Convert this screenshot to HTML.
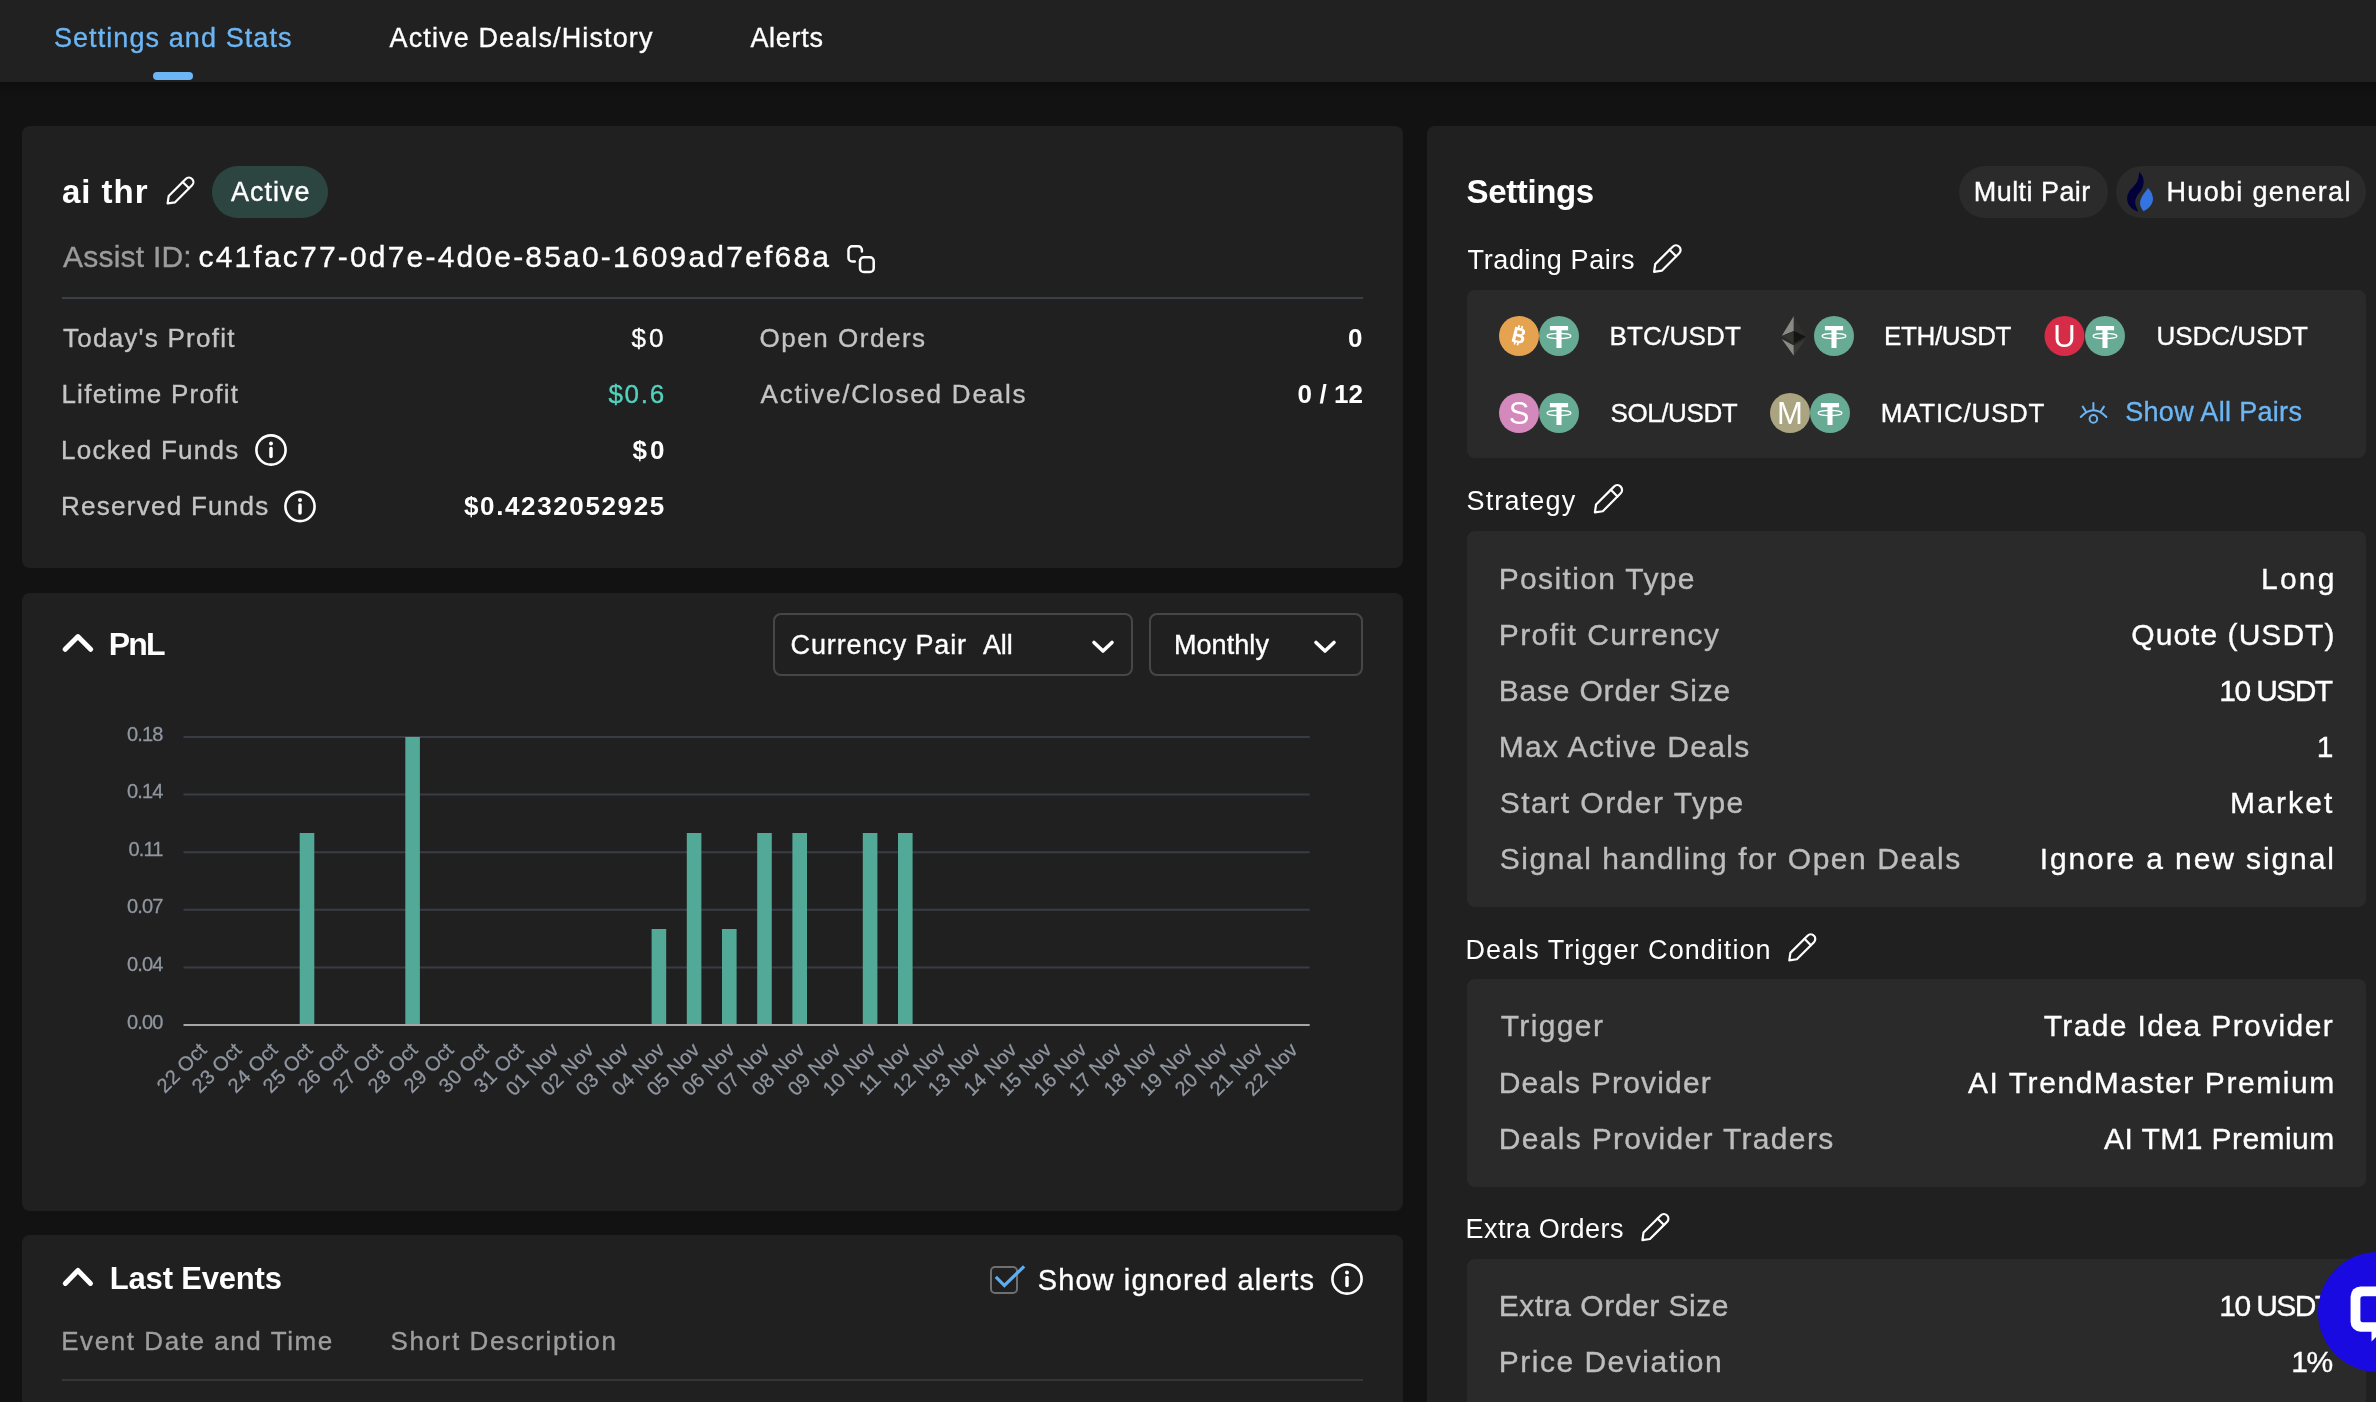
<!DOCTYPE html><html><head><meta charset="utf-8"><style>
html,body{margin:0;padding:0;width:2376px;height:1402px;overflow:hidden;background:#121212;font-family:"Liberation Sans",sans-serif}
.t{position:absolute;white-space:pre;font-family:"Liberation Sans",sans-serif;-webkit-font-smoothing:antialiased}
body{-webkit-font-smoothing:antialiased}
</style></head><body>
<div style="position:absolute;left:0px;top:0px;width:2376px;height:82px;background:#212121;border-radius:0px;"></div>
<div style="position:absolute;left:0px;top:82px;width:2376px;height:14px;background:linear-gradient(#0e0e0e,#121212);border-radius:0px;"></div>
<div style="position:absolute;left:153px;top:72px;width:40px;height:8px;background:#6cb6f5;border-radius:4px;"></div>
<div style="position:absolute;left:22px;top:126px;width:1381px;height:442px;background:#202020;border-radius:8px;"></div>
<div style="position:absolute;left:22px;top:593px;width:1381px;height:618px;background:#202020;border-radius:8px;"></div>
<div style="position:absolute;left:22px;top:1235px;width:1381px;height:185px;background:#202020;border-radius:8px;"></div>
<div style="position:absolute;left:1427px;top:126px;width:973px;height:1294px;background:#202020;border-radius:8px;"></div>
<div style="position:absolute;left:212px;top:166px;width:116px;height:52px;background:#2c4541;border-radius:26px;"></div>
<div style="position:absolute;left:62px;top:297px;width:1301px;height:2px;background:#3b3f48;border-radius:0px;"></div>
<div style="position:absolute;left:773px;top:613px;width:360px;height:63px;background:transparent;border-radius:8px;box-sizing:border-box;border:2px solid #474747;"></div>
<div style="position:absolute;left:1149px;top:613px;width:214px;height:63px;background:transparent;border-radius:8px;box-sizing:border-box;border:2px solid #474747;"></div>
<div style="position:absolute;left:990px;top:1266px;width:28px;height:28px;background:transparent;border-radius:5px;box-sizing:border-box;border:2px solid #6f6f6f;"></div>
<div style="position:absolute;left:62px;top:1379px;width:1301px;height:2px;background:#363636;border-radius:0px;"></div>
<div style="position:absolute;left:1959px;top:166px;width:149px;height:52px;background:#2b2b2b;border-radius:26px;"></div>
<div style="position:absolute;left:2116px;top:166px;width:250px;height:52px;background:#2b2b2b;border-radius:26px;"></div>
<div style="position:absolute;left:1467px;top:290px;width:899px;height:168px;background:#2a2a2a;border-radius:8px;"></div>
<div style="position:absolute;left:1467px;top:531px;width:899px;height:376px;background:#2a2a2a;border-radius:8px;"></div>
<div style="position:absolute;left:1467px;top:979px;width:899px;height:208px;background:#2a2a2a;border-radius:8px;"></div>
<div style="position:absolute;left:1467px;top:1259px;width:899px;height:181px;background:#2a2a2a;border-radius:8px;"></div>
<svg width="2376" height="1402" style="position:absolute;left:0;top:0;will-change:transform"><g transform="translate(167.60,203.40) rotate(-45)" fill="none" stroke="#fff" stroke-width="2.2" stroke-linejoin="round" stroke-linecap="round"><path d="M0,0 L6.08,-4.51 L30.10,-4.51 A4.51,4.51 0 0 1 30.10,4.51 L6.08,4.51 Z"/><path d="M25.80,-4.51 L25.80,4.51"/></g><g transform="translate(1654.10,271.80) rotate(-45)" fill="none" stroke="#fff" stroke-width="2.2" stroke-linejoin="round" stroke-linecap="round"><path d="M0,0 L6.25,-4.63 L30.92,-4.63 A4.63,4.63 0 0 1 30.92,4.63 L6.25,4.63 Z"/><path d="M26.50,-4.63 L26.50,4.63"/></g><g transform="translate(1594.90,512.40) rotate(-45)" fill="none" stroke="#fff" stroke-width="2.2" stroke-linejoin="round" stroke-linecap="round"><path d="M0,0 L6.41,-4.75 L31.73,-4.75 A4.75,4.75 0 0 1 31.73,4.75 L6.41,4.75 Z"/><path d="M27.20,-4.75 L27.20,4.75"/></g><g transform="translate(1789.30,960.40) rotate(-45)" fill="none" stroke="#fff" stroke-width="2.2" stroke-linejoin="round" stroke-linecap="round"><path d="M0,0 L6.13,-4.54 L30.33,-4.54 A4.54,4.54 0 0 1 30.33,4.54 L6.13,4.54 Z"/><path d="M26.00,-4.54 L26.00,4.54"/></g><g transform="translate(1642.40,1240.10) rotate(-45)" fill="none" stroke="#fff" stroke-width="2.2" stroke-linejoin="round" stroke-linecap="round"><path d="M0,0 L6.13,-4.54 L30.33,-4.54 A4.54,4.54 0 0 1 30.33,4.54 L6.13,4.54 Z"/><path d="M26.00,-4.54 L26.00,4.54"/></g><circle cx="271" cy="450" r="14.6" fill="none" stroke="#fff" stroke-width="2.6"/><circle cx="271" cy="443.4" r="2" fill="#fff"/><line x1="271" y1="448.4" x2="271" y2="456.6" stroke="#fff" stroke-width="3.5" stroke-linecap="round"/><circle cx="300" cy="506.5" r="14.6" fill="none" stroke="#fff" stroke-width="2.6"/><circle cx="300" cy="499.9" r="2" fill="#fff"/><line x1="300" y1="504.9" x2="300" y2="513.1" stroke="#fff" stroke-width="3.5" stroke-linecap="round"/><circle cx="1347" cy="1279" r="14.6" fill="none" stroke="#fff" stroke-width="2.6"/><circle cx="1347" cy="1272.4" r="2" fill="#fff"/><line x1="1347" y1="1277.4" x2="1347" y2="1285.6" stroke="#fff" stroke-width="3.5" stroke-linecap="round"/><g fill="none" stroke="#fff" stroke-width="2.5" stroke-linecap="round" stroke-linejoin="round"><path d="M861.9 251.5 v-1.5 a3.8 3.8 0 0 0 -3.8 -3.8 h-5.8 a3.8 3.8 0 0 0 -3.8 3.8 v7.8 a3.8 3.8 0 0 0 3.8 3.8 h2.5"/><rect x="860" y="257.3" width="13.7" height="14.8" rx="3.8"/></g><polyline points="65.2,649.3 77.9,636.6 90.6,649.3" fill="none" stroke="#fff" stroke-width="5" stroke-linecap="round" stroke-linejoin="round"/><polyline points="65.3,1283.4 77.9,1270.4 90.5,1283.4" fill="none" stroke="#fff" stroke-width="5" stroke-linecap="round" stroke-linejoin="round"/><polyline points="1094,642.5 1103,651 1112,642.5" fill="none" stroke="#fff" stroke-width="3.6" stroke-linecap="round" stroke-linejoin="round"/><polyline points="1316,642.5 1325,651 1334,642.5" fill="none" stroke="#fff" stroke-width="3.6" stroke-linecap="round" stroke-linejoin="round"/><polyline points="997,1278 1004.4,1285.5 1023,1267.5" fill="none" stroke="#5caef2" stroke-width="3.2" stroke-linecap="square"/><line x1="183.5" y1="737.0" x2="1309.7" y2="737.0" stroke="#383c44" stroke-width="2"/><line x1="183.5" y1="794.6" x2="1309.7" y2="794.6" stroke="#383c44" stroke-width="2"/><line x1="183.5" y1="852.2" x2="1309.7" y2="852.2" stroke="#383c44" stroke-width="2"/><line x1="183.5" y1="909.8" x2="1309.7" y2="909.8" stroke="#383c44" stroke-width="2"/><line x1="183.5" y1="967.4" x2="1309.7" y2="967.4" stroke="#383c44" stroke-width="2"/><line x1="183.5" y1="1025" x2="1309.7" y2="1025" stroke="#a6a6a6" stroke-width="2.2"/><rect x="299.7" y="833.0" width="14.6" height="191.0" fill="#53a997"/><rect x="405.3" y="737.0" width="14.6" height="287.0" fill="#53a997"/><rect x="651.6" y="929.0" width="14.6" height="95.0" fill="#53a997"/><rect x="686.8" y="833.0" width="14.6" height="191.0" fill="#53a997"/><rect x="722.0" y="929.0" width="14.6" height="95.0" fill="#53a997"/><rect x="757.2" y="833.0" width="14.6" height="191.0" fill="#53a997"/><rect x="792.4" y="833.0" width="14.6" height="191.0" fill="#53a997"/><rect x="862.8" y="833.0" width="14.6" height="191.0" fill="#53a997"/><rect x="898.0" y="833.0" width="14.6" height="191.0" fill="#53a997"/><g fill="none" stroke="#6cb6f5" stroke-width="2" stroke-linecap="round"><path d="M2080.8 417 Q2093.4 403.5 2106.4 417"/><line x1="2093.4" y1="410" x2="2093.4" y2="403"/><line x1="2085.7" y1="411.2" x2="2082.8" y2="406.6"/><line x1="2100.9" y1="411.2" x2="2103.9" y2="406.6"/><circle cx="2093.4" cy="418.9" r="3.8"/></g><g transform="translate(2120,165)"><path fill="#01003a" d="M19.2 7.1 C25 12 25 21 20 27 C16 31 14 37 16 41 C17 44 18.4 46.7 18.4 46.7 C12 45 7 40 7.1 33.3 C7.2 26 14 22 17 17 C19 13 19.2 7.1 19.2 7.1Z"/><path fill="#3474e0" d="M27.9 23.1 C31 26 33 30 33 34.1 C33 40 28 44 23.5 46.3 C21 43 20 40 20 38.4 C20.5 31 26 27 27.9 23.1Z"/></g><circle cx="1519" cy="336" r="20" fill="#e5a350"/><g transform="translate(1518.5,335.3) rotate(14)" fill="#fff"><path fill-rule="evenodd" d="M-5.2,-7.6 h6.4 c3,0 4.6,1.6 4.6,3.8 c0,1.6 -0.9,2.7 -2.2,3.2 c1.8,0.4 3,1.8 3,3.8 c0,2.6 -1.9,4.4 -5,4.4 h-6.8 z M-2.1,-5 v3.7 h2.9 c1.3,0 2.1,-0.7 2.1,-1.85 c0,-1.15 -0.8,-1.85 -2.1,-1.85 z M-2.1,1.5 v3.8 h3.3 c1.5,0 2.4,-0.75 2.4,-1.9 c0,-1.15 -0.9,-1.9 -2.4,-1.9 z"/><rect x="-2.6" y="-10" width="1.7" height="3"/><rect x="0.6" y="-10" width="1.7" height="3"/><rect x="-2.6" y="7" width="1.7" height="3"/><rect x="0.6" y="7" width="1.7" height="3"/></g><circle cx="1559" cy="336" r="20" fill="#67ab95"/><g fill="#fff"><rect x="1549.9" y="326" width="18.2" height="4.3"/><rect x="1556.45" y="330" width="5.1" height="18"/></g><ellipse cx="1559" cy="336" rx="12" ry="2.65" fill="none" stroke="#fff" stroke-width="1.2"/><g><polygon points="1793.8,315.9 1781.7,336 1793.8,331" fill="#8a8a86"/><polygon points="1793.8,315.9 1805.8,336.5 1793.8,331" fill="#2f2f2f"/><polygon points="1781.7,336 1793.8,331 1793.8,343.5" fill="#333331"/><polygon points="1793.8,331 1805.8,336.5 1793.8,343.5" fill="#141412"/><polygon points="1781.7,339 1793.8,345.4 1793.8,355.8" fill="#8a8a86"/><polygon points="1805.8,339 1793.8,345.4 1793.8,355.8" fill="#393934"/></g><circle cx="1834" cy="336" r="20" fill="#67ab95"/><g fill="#fff"><rect x="1824.9" y="326" width="18.2" height="4.3"/><rect x="1831.45" y="330" width="5.1" height="18"/></g><ellipse cx="1834" cy="336" rx="12" ry="2.65" fill="none" stroke="#fff" stroke-width="1.2"/><circle cx="2064.5" cy="336" r="20" fill="#d72c48"/><text x="2064.5" y="346.8" text-anchor="middle" font-family="Liberation Sans" font-size="31" fill="#fff">U</text><circle cx="2105" cy="336" r="20" fill="#67ab95"/><g fill="#fff"><rect x="2095.9" y="326" width="18.2" height="4.3"/><rect x="2102.45" y="330" width="5.1" height="18"/></g><ellipse cx="2105" cy="336" rx="12" ry="2.65" fill="none" stroke="#fff" stroke-width="1.2"/><circle cx="1519" cy="413" r="20" fill="#d489bc"/><text x="1519" y="423.8" text-anchor="middle" font-family="Liberation Sans" font-size="31" fill="#fff">S</text><circle cx="1559" cy="413" r="20" fill="#67ab95"/><g fill="#fff"><rect x="1549.9" y="403" width="18.2" height="4.3"/><rect x="1556.45" y="407" width="5.1" height="18"/></g><ellipse cx="1559" cy="413" rx="12" ry="2.65" fill="none" stroke="#fff" stroke-width="1.2"/><circle cx="1790" cy="413" r="20" fill="#aaa480"/><text x="1790" y="423.8" text-anchor="middle" font-family="Liberation Sans" font-size="31" fill="#fff">M</text><circle cx="1830" cy="413" r="20" fill="#67ab95"/><g fill="#fff"><rect x="1820.9" y="403" width="18.2" height="4.3"/><rect x="1827.45" y="407" width="5.1" height="18"/></g><ellipse cx="1830" cy="413" rx="12" ry="2.65" fill="none" stroke="#fff" stroke-width="1.2"/></svg>
<div style="position:absolute;left:0;top:0;width:2376px;height:1402px;will-change:transform">
<div class="t" style="left:53.9px;top:25.4px;font-size:27px;line-height:27px;font-weight:400;color:#6cb6f5;letter-spacing:1.09px;-webkit-text-stroke:0.35px #6cb6f5">Settings and Stats</div>
<div class="t" style="left:389.6px;top:25.4px;font-size:27px;line-height:27px;font-weight:400;color:#ffffff;letter-spacing:1.12px;-webkit-text-stroke:0.35px #ffffff">Active Deals/History</div>
<div class="t" style="left:750.4px;top:25.4px;font-size:27px;line-height:27px;font-weight:400;color:#ffffff;letter-spacing:0.72px;-webkit-text-stroke:0.35px #ffffff">Alerts</div>
<div class="t" style="left:61.9px;top:174.8px;font-size:33px;line-height:33px;font-weight:700;color:#ffffff;letter-spacing:0.98px;">ai thr</div>
<div class="t" style="left:231.0px;top:179.2px;font-size:27px;line-height:27px;font-weight:400;color:#ffffff;letter-spacing:1.00px;-webkit-text-stroke:0.35px #ffffff">Active</div>
<div class="t" style="left:63.0px;top:242.2px;font-size:30px;line-height:30px;font-weight:400;color:#9c9c9c;letter-spacing:0.22px;-webkit-text-stroke:0.35px #9c9c9c">Assist ID:</div>
<div class="t" style="left:198.5px;top:242.2px;font-size:30px;line-height:30px;font-weight:400;color:#ffffff;letter-spacing:2.19px;-webkit-text-stroke:0.35px #ffffff">c41fac77-0d7e-4d0e-85a0-1609ad7ef68a</div>
<div class="t" style="left:63.0px;top:324.9px;font-size:26px;line-height:26px;font-weight:400;color:#c4c4c4;letter-spacing:1.24px;-webkit-text-stroke:0.35px #c4c4c4">Today&#x27;s Profit</div>
<div class="t" style="left:631.5px;top:324.9px;font-size:26px;line-height:26px;font-weight:400;color:#ffffff;letter-spacing:3.00px;-webkit-text-stroke:0.35px #ffffff">$0</div>
<div class="t" style="left:61.4px;top:380.9px;font-size:26px;line-height:26px;font-weight:400;color:#c4c4c4;letter-spacing:1.26px;-webkit-text-stroke:0.35px #c4c4c4">Lifetime Profit</div>
<div class="t" style="left:608.4px;top:380.9px;font-size:26px;line-height:26px;font-weight:400;color:#52d2bd;letter-spacing:1.70px;-webkit-text-stroke:0.35px #52d2bd">$0.6</div>
<div class="t" style="left:61.0px;top:436.9px;font-size:26px;line-height:26px;font-weight:400;color:#c4c4c4;letter-spacing:1.27px;-webkit-text-stroke:0.35px #c4c4c4">Locked Funds</div>
<div class="t" style="left:632.5px;top:436.9px;font-size:26px;line-height:26px;font-weight:700;color:#ffffff;letter-spacing:3.00px;">$0</div>
<div class="t" style="left:61.0px;top:493.4px;font-size:26px;line-height:26px;font-weight:400;color:#c4c4c4;letter-spacing:1.27px;-webkit-text-stroke:0.35px #c4c4c4">Reserved Funds</div>
<div class="t" style="left:464.0px;top:493.4px;font-size:26px;line-height:26px;font-weight:700;color:#ffffff;letter-spacing:1.62px;">$0.4232052925</div>
<div class="t" style="left:759.6px;top:324.9px;font-size:26px;line-height:26px;font-weight:400;color:#c4c4c4;letter-spacing:1.52px;-webkit-text-stroke:0.35px #c4c4c4">Open Orders</div>
<div class="t" style="left:1348.0px;top:324.9px;font-size:26px;line-height:26px;font-weight:700;color:#ffffff;letter-spacing:0.00px;">0</div>
<div class="t" style="left:760.6px;top:380.9px;font-size:26px;line-height:26px;font-weight:400;color:#c4c4c4;letter-spacing:1.79px;-webkit-text-stroke:0.35px #c4c4c4">Active/Closed Deals</div>
<div class="t" style="left:1297.5px;top:380.9px;font-size:26px;line-height:26px;font-weight:700;color:#ffffff;letter-spacing:0.10px;">0 / 12</div>
<div class="t" style="left:108.7px;top:628.2px;font-size:32px;line-height:32px;font-weight:700;color:#ffffff;letter-spacing:-1.80px;">PnL</div>
<div class="t" style="left:790.5px;top:632.2px;font-size:27px;line-height:27px;font-weight:400;color:#ffffff;letter-spacing:0.88px;-webkit-text-stroke:0.35px #ffffff">Currency Pair</div>
<div class="t" style="left:983.0px;top:632.2px;font-size:27px;line-height:27px;font-weight:400;color:#ffffff;letter-spacing:-0.15px;-webkit-text-stroke:0.35px #ffffff">All</div>
<div class="t" style="left:1173.9px;top:632.2px;font-size:27px;line-height:27px;font-weight:400;color:#ffffff;letter-spacing:0.08px;-webkit-text-stroke:0.35px #ffffff">Monthly</div>
<div class="t" style="left:109.8px;top:1262.8px;font-size:31px;line-height:31px;font-weight:700;color:#ffffff;letter-spacing:-0.18px;">Last Events</div>
<div class="t" style="left:1037.7px;top:1265.8px;font-size:29px;line-height:29px;font-weight:400;color:#ffffff;letter-spacing:1.11px;-webkit-text-stroke:0.35px #ffffff">Show ignored alerts</div>
<div class="t" style="left:61.2px;top:1327.9px;font-size:26px;line-height:26px;font-weight:400;color:#9e9e9e;letter-spacing:1.57px;-webkit-text-stroke:0.35px #9e9e9e">Event Date and Time</div>
<div class="t" style="left:390.5px;top:1327.9px;font-size:26px;line-height:26px;font-weight:400;color:#9e9e9e;letter-spacing:1.62px;-webkit-text-stroke:0.35px #9e9e9e">Short Description</div>
<div class="t" style="left:1466.5px;top:175.1px;font-size:33px;line-height:33px;font-weight:700;color:#ffffff;letter-spacing:-0.36px;">Settings</div>
<div class="t" style="left:1973.8px;top:179.2px;font-size:27px;line-height:27px;font-weight:400;color:#ffffff;letter-spacing:0.44px;-webkit-text-stroke:0.35px #ffffff">Multi Pair</div>
<div class="t" style="left:2166.5px;top:179.2px;font-size:27px;line-height:27px;font-weight:400;color:#ffffff;letter-spacing:1.32px;-webkit-text-stroke:0.35px #ffffff">Huobi general</div>
<div class="t" style="left:1467.6px;top:247.1px;font-size:27px;line-height:27px;font-weight:400;color:#ffffff;letter-spacing:0.62px;">Trading Pairs</div>
<div class="t" style="left:1609.5px;top:323.4px;font-size:26px;line-height:26px;font-weight:400;color:#ffffff;letter-spacing:0.19px;-webkit-text-stroke:0.35px #ffffff">BTC/USDT</div>
<div class="t" style="left:1884.0px;top:323.4px;font-size:26px;line-height:26px;font-weight:400;color:#ffffff;letter-spacing:-0.36px;-webkit-text-stroke:0.35px #ffffff">ETH/USDT</div>
<div class="t" style="left:2156.6px;top:323.4px;font-size:26px;line-height:26px;font-weight:400;color:#ffffff;letter-spacing:-0.06px;-webkit-text-stroke:0.35px #ffffff">USDC/USDT</div>
<div class="t" style="left:1610.5px;top:399.9px;font-size:26px;line-height:26px;font-weight:400;color:#ffffff;letter-spacing:-0.41px;-webkit-text-stroke:0.35px #ffffff">SOL/USDT</div>
<div class="t" style="left:1880.8px;top:399.9px;font-size:26px;line-height:26px;font-weight:400;color:#ffffff;letter-spacing:0.74px;-webkit-text-stroke:0.35px #ffffff">MATIC/USDT</div>
<div class="t" style="left:2125.2px;top:399.1px;font-size:27px;line-height:27px;font-weight:400;color:#6cb6f5;letter-spacing:0.32px;-webkit-text-stroke:0.35px #6cb6f5">Show All Pairs</div>
<div class="t" style="left:1466.5px;top:488.2px;font-size:27px;line-height:27px;font-weight:400;color:#ffffff;letter-spacing:1.17px;">Strategy</div>
<div class="t" style="left:1498.7px;top:563.6px;font-size:30px;line-height:30px;font-weight:400;color:#bdbdbd;letter-spacing:1.35px;-webkit-text-stroke:0.35px #bdbdbd">Position Type</div>
<div class="t" style="left:2261.0px;top:563.6px;font-size:30px;line-height:30px;font-weight:400;color:#ffffff;letter-spacing:2.23px;-webkit-text-stroke:0.35px #ffffff">Long</div>
<div class="t" style="left:1498.7px;top:619.8px;font-size:30px;line-height:30px;font-weight:400;color:#bdbdbd;letter-spacing:1.45px;-webkit-text-stroke:0.35px #bdbdbd">Profit Currency</div>
<div class="t" style="left:2131.3px;top:619.8px;font-size:30px;line-height:30px;font-weight:400;color:#ffffff;letter-spacing:1.04px;-webkit-text-stroke:0.35px #ffffff">Quote (USDT)</div>
<div class="t" style="left:1498.7px;top:676.0px;font-size:30px;line-height:30px;font-weight:400;color:#bdbdbd;letter-spacing:0.81px;-webkit-text-stroke:0.35px #bdbdbd">Base Order Size</div>
<div class="t" style="left:2219.3px;top:676.0px;font-size:30px;line-height:30px;font-weight:400;color:#ffffff;letter-spacing:-1.60px;-webkit-text-stroke:0.35px #ffffff">10 USDT</div>
<div class="t" style="left:1498.7px;top:732.0px;font-size:30px;line-height:30px;font-weight:400;color:#bdbdbd;letter-spacing:1.37px;-webkit-text-stroke:0.35px #bdbdbd">Max Active Deals</div>
<div class="t" style="left:2316.7px;top:732.0px;font-size:30px;line-height:30px;font-weight:400;color:#ffffff;letter-spacing:0.00px;-webkit-text-stroke:0.35px #ffffff">1</div>
<div class="t" style="left:1499.7px;top:788.0px;font-size:30px;line-height:30px;font-weight:400;color:#bdbdbd;letter-spacing:1.49px;-webkit-text-stroke:0.35px #bdbdbd">Start Order Type</div>
<div class="t" style="left:2230.0px;top:788.0px;font-size:30px;line-height:30px;font-weight:400;color:#ffffff;letter-spacing:2.14px;-webkit-text-stroke:0.35px #ffffff">Market</div>
<div class="t" style="left:1499.7px;top:844.0px;font-size:30px;line-height:30px;font-weight:400;color:#bdbdbd;letter-spacing:1.56px;-webkit-text-stroke:0.35px #bdbdbd">Signal handling for Open Deals</div>
<div class="t" style="left:2039.7px;top:844.0px;font-size:30px;line-height:30px;font-weight:400;color:#ffffff;letter-spacing:1.89px;-webkit-text-stroke:0.35px #ffffff">Ignore a new signal</div>
<div class="t" style="left:1465.5px;top:937.1px;font-size:27px;line-height:27px;font-weight:400;color:#ffffff;letter-spacing:1.04px;">Deals Trigger Condition</div>
<div class="t" style="left:1500.7px;top:1011.3px;font-size:30px;line-height:30px;font-weight:400;color:#bdbdbd;letter-spacing:1.38px;-webkit-text-stroke:0.35px #bdbdbd">Trigger</div>
<div class="t" style="left:2043.7px;top:1011.3px;font-size:30px;line-height:30px;font-weight:400;color:#ffffff;letter-spacing:1.39px;-webkit-text-stroke:0.35px #ffffff">Trade Idea Provider</div>
<div class="t" style="left:1498.7px;top:1067.6px;font-size:30px;line-height:30px;font-weight:400;color:#bdbdbd;letter-spacing:1.18px;-webkit-text-stroke:0.35px #bdbdbd">Deals Provider</div>
<div class="t" style="left:1968.0px;top:1067.6px;font-size:30px;line-height:30px;font-weight:400;color:#ffffff;letter-spacing:1.56px;-webkit-text-stroke:0.35px #ffffff">AI TrendMaster Premium</div>
<div class="t" style="left:1498.7px;top:1123.9px;font-size:30px;line-height:30px;font-weight:400;color:#bdbdbd;letter-spacing:1.32px;-webkit-text-stroke:0.35px #bdbdbd">Deals Provider Traders</div>
<div class="t" style="left:2104.1px;top:1123.9px;font-size:30px;line-height:30px;font-weight:400;color:#ffffff;letter-spacing:0.43px;-webkit-text-stroke:0.35px #ffffff">AI TM1 Premium</div>
<div class="t" style="left:1465.5px;top:1216.0px;font-size:27px;line-height:27px;font-weight:400;color:#ffffff;letter-spacing:0.45px;">Extra Orders</div>
<div class="t" style="left:1498.7px;top:1290.9px;font-size:30px;line-height:30px;font-weight:400;color:#bdbdbd;letter-spacing:0.54px;-webkit-text-stroke:0.35px #bdbdbd">Extra Order Size</div>
<div class="t" style="left:2219.3px;top:1290.9px;font-size:30px;line-height:30px;font-weight:400;color:#ffffff;letter-spacing:-1.60px;-webkit-text-stroke:0.35px #ffffff">10 USDT</div>
<div class="t" style="left:1498.7px;top:1347.3px;font-size:30px;line-height:30px;font-weight:400;color:#bdbdbd;letter-spacing:1.51px;-webkit-text-stroke:0.35px #bdbdbd">Price Deviation</div>
<div class="t" style="left:2291.3px;top:1347.3px;font-size:30px;line-height:30px;font-weight:400;color:#ffffff;letter-spacing:-1.60px;-webkit-text-stroke:0.35px #ffffff">1%</div>
<div class="t" style="left:62px;width:100.7px;text-align:right;top:723.5px;font-size:20px;line-height:20px;color:#8f96a0;letter-spacing:-0.8px;-webkit-text-stroke:0.3px #8f96a0">0.18</div>
<div class="t" style="left:62px;width:100.7px;text-align:right;top:781.1px;font-size:20px;line-height:20px;color:#8f96a0;letter-spacing:-0.8px;-webkit-text-stroke:0.3px #8f96a0">0.14</div>
<div class="t" style="left:62px;width:100.7px;text-align:right;top:838.7px;font-size:20px;line-height:20px;color:#8f96a0;letter-spacing:-0.8px;-webkit-text-stroke:0.3px #8f96a0">0.11</div>
<div class="t" style="left:62px;width:100.7px;text-align:right;top:896.3px;font-size:20px;line-height:20px;color:#8f96a0;letter-spacing:-0.8px;-webkit-text-stroke:0.3px #8f96a0">0.07</div>
<div class="t" style="left:62px;width:100.7px;text-align:right;top:953.9px;font-size:20px;line-height:20px;color:#8f96a0;letter-spacing:-0.8px;-webkit-text-stroke:0.3px #8f96a0">0.04</div>
<div class="t" style="left:62px;width:100.7px;text-align:right;top:1011.5px;font-size:20px;line-height:20px;color:#8f96a0;letter-spacing:-0.8px;-webkit-text-stroke:0.3px #8f96a0">0.00</div>
<div class="t" style="left:88.1px;width:120px;text-align:right;top:1034.0px;font-size:20px;line-height:20px;color:#8f96a0;letter-spacing:0.3px;-webkit-text-stroke:0.3px #8f96a0;transform-origin:100% 85%;transform:rotate(-45deg)">22 Oct</div>
<div class="t" style="left:123.3px;width:120px;text-align:right;top:1034.0px;font-size:20px;line-height:20px;color:#8f96a0;letter-spacing:0.3px;-webkit-text-stroke:0.3px #8f96a0;transform-origin:100% 85%;transform:rotate(-45deg)">23 Oct</div>
<div class="t" style="left:158.5px;width:120px;text-align:right;top:1034.0px;font-size:20px;line-height:20px;color:#8f96a0;letter-spacing:0.3px;-webkit-text-stroke:0.3px #8f96a0;transform-origin:100% 85%;transform:rotate(-45deg)">24 Oct</div>
<div class="t" style="left:193.7px;width:120px;text-align:right;top:1034.0px;font-size:20px;line-height:20px;color:#8f96a0;letter-spacing:0.3px;-webkit-text-stroke:0.3px #8f96a0;transform-origin:100% 85%;transform:rotate(-45deg)">25 Oct</div>
<div class="t" style="left:228.9px;width:120px;text-align:right;top:1034.0px;font-size:20px;line-height:20px;color:#8f96a0;letter-spacing:0.3px;-webkit-text-stroke:0.3px #8f96a0;transform-origin:100% 85%;transform:rotate(-45deg)">26 Oct</div>
<div class="t" style="left:264.1px;width:120px;text-align:right;top:1034.0px;font-size:20px;line-height:20px;color:#8f96a0;letter-spacing:0.3px;-webkit-text-stroke:0.3px #8f96a0;transform-origin:100% 85%;transform:rotate(-45deg)">27 Oct</div>
<div class="t" style="left:299.3px;width:120px;text-align:right;top:1034.0px;font-size:20px;line-height:20px;color:#8f96a0;letter-spacing:0.3px;-webkit-text-stroke:0.3px #8f96a0;transform-origin:100% 85%;transform:rotate(-45deg)">28 Oct</div>
<div class="t" style="left:334.5px;width:120px;text-align:right;top:1034.0px;font-size:20px;line-height:20px;color:#8f96a0;letter-spacing:0.3px;-webkit-text-stroke:0.3px #8f96a0;transform-origin:100% 85%;transform:rotate(-45deg)">29 Oct</div>
<div class="t" style="left:369.6px;width:120px;text-align:right;top:1034.0px;font-size:20px;line-height:20px;color:#8f96a0;letter-spacing:0.3px;-webkit-text-stroke:0.3px #8f96a0;transform-origin:100% 85%;transform:rotate(-45deg)">30 Oct</div>
<div class="t" style="left:404.8px;width:120px;text-align:right;top:1034.0px;font-size:20px;line-height:20px;color:#8f96a0;letter-spacing:0.3px;-webkit-text-stroke:0.3px #8f96a0;transform-origin:100% 85%;transform:rotate(-45deg)">31 Oct</div>
<div class="t" style="left:440.0px;width:120px;text-align:right;top:1034.0px;font-size:20px;line-height:20px;color:#8f96a0;letter-spacing:0.3px;-webkit-text-stroke:0.3px #8f96a0;transform-origin:100% 85%;transform:rotate(-45deg)">01 Nov</div>
<div class="t" style="left:475.2px;width:120px;text-align:right;top:1034.0px;font-size:20px;line-height:20px;color:#8f96a0;letter-spacing:0.3px;-webkit-text-stroke:0.3px #8f96a0;transform-origin:100% 85%;transform:rotate(-45deg)">02 Nov</div>
<div class="t" style="left:510.4px;width:120px;text-align:right;top:1034.0px;font-size:20px;line-height:20px;color:#8f96a0;letter-spacing:0.3px;-webkit-text-stroke:0.3px #8f96a0;transform-origin:100% 85%;transform:rotate(-45deg)">03 Nov</div>
<div class="t" style="left:545.6px;width:120px;text-align:right;top:1034.0px;font-size:20px;line-height:20px;color:#8f96a0;letter-spacing:0.3px;-webkit-text-stroke:0.3px #8f96a0;transform-origin:100% 85%;transform:rotate(-45deg)">04 Nov</div>
<div class="t" style="left:580.8px;width:120px;text-align:right;top:1034.0px;font-size:20px;line-height:20px;color:#8f96a0;letter-spacing:0.3px;-webkit-text-stroke:0.3px #8f96a0;transform-origin:100% 85%;transform:rotate(-45deg)">05 Nov</div>
<div class="t" style="left:616.0px;width:120px;text-align:right;top:1034.0px;font-size:20px;line-height:20px;color:#8f96a0;letter-spacing:0.3px;-webkit-text-stroke:0.3px #8f96a0;transform-origin:100% 85%;transform:rotate(-45deg)">06 Nov</div>
<div class="t" style="left:651.2px;width:120px;text-align:right;top:1034.0px;font-size:20px;line-height:20px;color:#8f96a0;letter-spacing:0.3px;-webkit-text-stroke:0.3px #8f96a0;transform-origin:100% 85%;transform:rotate(-45deg)">07 Nov</div>
<div class="t" style="left:686.4px;width:120px;text-align:right;top:1034.0px;font-size:20px;line-height:20px;color:#8f96a0;letter-spacing:0.3px;-webkit-text-stroke:0.3px #8f96a0;transform-origin:100% 85%;transform:rotate(-45deg)">08 Nov</div>
<div class="t" style="left:721.6px;width:120px;text-align:right;top:1034.0px;font-size:20px;line-height:20px;color:#8f96a0;letter-spacing:0.3px;-webkit-text-stroke:0.3px #8f96a0;transform-origin:100% 85%;transform:rotate(-45deg)">09 Nov</div>
<div class="t" style="left:756.8px;width:120px;text-align:right;top:1034.0px;font-size:20px;line-height:20px;color:#8f96a0;letter-spacing:0.3px;-webkit-text-stroke:0.3px #8f96a0;transform-origin:100% 85%;transform:rotate(-45deg)">10 Nov</div>
<div class="t" style="left:792.0px;width:120px;text-align:right;top:1034.0px;font-size:20px;line-height:20px;color:#8f96a0;letter-spacing:0.3px;-webkit-text-stroke:0.3px #8f96a0;transform-origin:100% 85%;transform:rotate(-45deg)">11 Nov</div>
<div class="t" style="left:827.2px;width:120px;text-align:right;top:1034.0px;font-size:20px;line-height:20px;color:#8f96a0;letter-spacing:0.3px;-webkit-text-stroke:0.3px #8f96a0;transform-origin:100% 85%;transform:rotate(-45deg)">12 Nov</div>
<div class="t" style="left:862.4px;width:120px;text-align:right;top:1034.0px;font-size:20px;line-height:20px;color:#8f96a0;letter-spacing:0.3px;-webkit-text-stroke:0.3px #8f96a0;transform-origin:100% 85%;transform:rotate(-45deg)">13 Nov</div>
<div class="t" style="left:897.6px;width:120px;text-align:right;top:1034.0px;font-size:20px;line-height:20px;color:#8f96a0;letter-spacing:0.3px;-webkit-text-stroke:0.3px #8f96a0;transform-origin:100% 85%;transform:rotate(-45deg)">14 Nov</div>
<div class="t" style="left:932.7px;width:120px;text-align:right;top:1034.0px;font-size:20px;line-height:20px;color:#8f96a0;letter-spacing:0.3px;-webkit-text-stroke:0.3px #8f96a0;transform-origin:100% 85%;transform:rotate(-45deg)">15 Nov</div>
<div class="t" style="left:967.9px;width:120px;text-align:right;top:1034.0px;font-size:20px;line-height:20px;color:#8f96a0;letter-spacing:0.3px;-webkit-text-stroke:0.3px #8f96a0;transform-origin:100% 85%;transform:rotate(-45deg)">16 Nov</div>
<div class="t" style="left:1003.1px;width:120px;text-align:right;top:1034.0px;font-size:20px;line-height:20px;color:#8f96a0;letter-spacing:0.3px;-webkit-text-stroke:0.3px #8f96a0;transform-origin:100% 85%;transform:rotate(-45deg)">17 Nov</div>
<div class="t" style="left:1038.3px;width:120px;text-align:right;top:1034.0px;font-size:20px;line-height:20px;color:#8f96a0;letter-spacing:0.3px;-webkit-text-stroke:0.3px #8f96a0;transform-origin:100% 85%;transform:rotate(-45deg)">18 Nov</div>
<div class="t" style="left:1073.5px;width:120px;text-align:right;top:1034.0px;font-size:20px;line-height:20px;color:#8f96a0;letter-spacing:0.3px;-webkit-text-stroke:0.3px #8f96a0;transform-origin:100% 85%;transform:rotate(-45deg)">19 Nov</div>
<div class="t" style="left:1108.7px;width:120px;text-align:right;top:1034.0px;font-size:20px;line-height:20px;color:#8f96a0;letter-spacing:0.3px;-webkit-text-stroke:0.3px #8f96a0;transform-origin:100% 85%;transform:rotate(-45deg)">20 Nov</div>
<div class="t" style="left:1143.9px;width:120px;text-align:right;top:1034.0px;font-size:20px;line-height:20px;color:#8f96a0;letter-spacing:0.3px;-webkit-text-stroke:0.3px #8f96a0;transform-origin:100% 85%;transform:rotate(-45deg)">21 Nov</div>
<div class="t" style="left:1179.1px;width:120px;text-align:right;top:1034.0px;font-size:20px;line-height:20px;color:#8f96a0;letter-spacing:0.3px;-webkit-text-stroke:0.3px #8f96a0;transform-origin:100% 85%;transform:rotate(-45deg)">22 Nov</div>
</div>
<svg width="2376" height="1402" style="position:absolute;left:0;top:0"><circle cx="2378" cy="1312" r="60" fill="#1a0ae2"/><rect x="2350.6" y="1286.4" width="60" height="45.4" rx="10" fill="#fff"/><rect x="2360.4" y="1296.2" width="60" height="26" rx="2.5" fill="#1a0ae2"/><polygon points="2371.5,1330 2371.5,1341.5 2383,1330" fill="#fff"/></svg>
</body></html>
